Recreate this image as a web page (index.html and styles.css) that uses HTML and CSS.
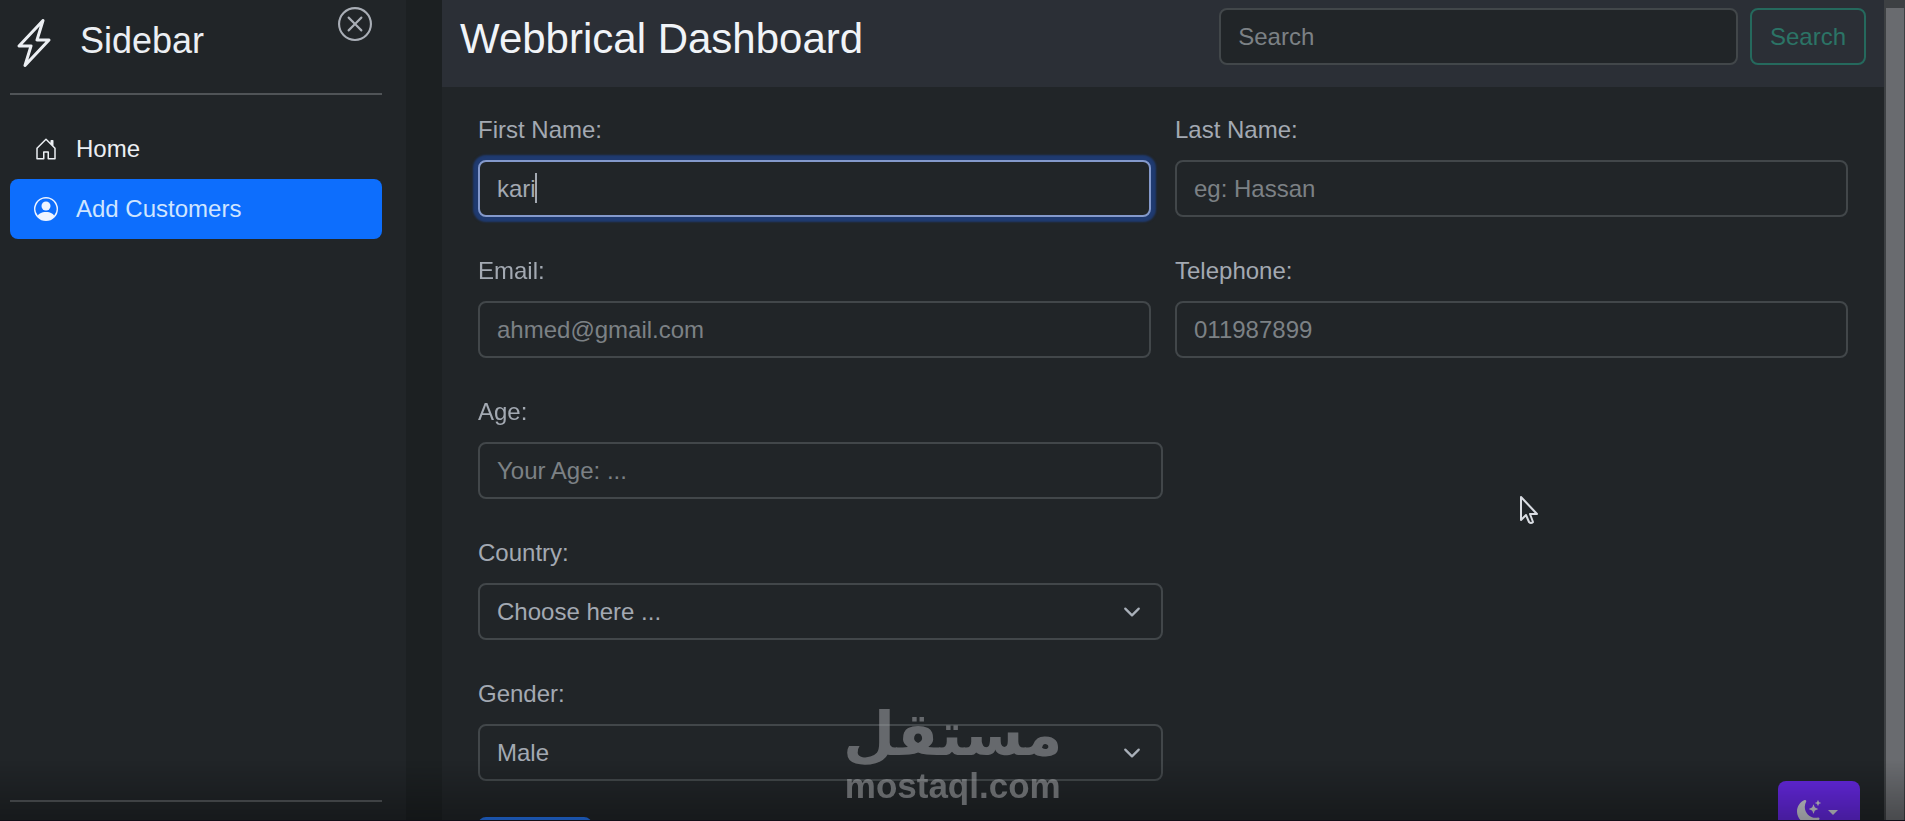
FILE: index.html
```
<!DOCTYPE html>
<html lang="en">
<head>
    <meta charset="UTF-8">
    <meta name="viewport" content="width=device-width, initial-scale=1.0">
    <title>Webbrical Dashboard</title>
    <link rel="stylesheet" href="styles.css">
</head>
<body>
    <div class="layout">
        <aside class="sidebar">
            <div class="sidebar-head">
                <a href="#" class="brand">
                    <svg class="brand-icon" viewBox="0 0 16 16" fill="currentColor" aria-hidden="true"><path d="M11.251.068a.5.5 0 0 1 .227.58L9.677 6.5H13a.5.5 0 0 1 .364.843l-8 8.5a.5.5 0 0 1-.842-.49L6.323 9.5H3a.5.5 0 0 1-.364-.843l8-8.5a.5.5 0 0 1 .615-.09zM4.157 8.5H7a.5.5 0 0 1 .478.647L6.11 13.59l5.732-6.09H9a.5.5 0 0 1-.478-.647L9.89 2.41z"/></svg>
                    <span>Sidebar</span>
                </a>
                <button type="button" class="close-button" aria-label="Close">
                    <svg viewBox="0 0 16 16" fill="currentColor"><path d="M8 15A7 7 0 1 1 8 1a7 7 0 0 1 0 14m0 1A8 8 0 1 0 8 0a8 8 0 0 0 0 16"/><path d="M4.646 4.646a.5.5 0 0 1 .708 0L8 7.293l2.646-2.647a.5.5 0 0 1 .708.708L8.707 8l2.647 2.646a.5.5 0 0 1-.708.708L8 8.707l-2.646 2.647a.5.5 0 0 1-.708-.708L7.293 8 4.646 5.354a.5.5 0 0 1 0-.708"/></svg>
                </button>
            </div>
            <hr class="divider">
            <nav class="nav">
                <a href="#" class="nav-link">
                    <svg class="nav-icon" viewBox="0 0 16 16" fill="currentColor" aria-hidden="true"><path d="M8.354 1.146a.5.5 0 0 0-.708 0l-6 6A.5.5 0 0 0 1.5 7.5v7a.5.5 0 0 0 .5.5h4.5a.5.5 0 0 0 .5-.5v-4h2v4a.5.5 0 0 0 .5.5H14a.5.5 0 0 0 .5-.5v-7a.5.5 0 0 0-.146-.354L13 5.793V2.5a.5.5 0 0 0-.5-.5h-1a.5.5 0 0 0-.5.5v1.293zM2.5 14V7.707l5.5-5.5 5.5 5.5V14H10v-4a.5.5 0 0 0-.5-.5h-3a.5.5 0 0 0-.5.5v4z"/></svg>
                    Home
                </a>
                <a href="#" class="nav-link active">
                    <svg class="nav-icon" viewBox="0 0 16 16" fill="currentColor" aria-hidden="true"><path d="M11 6a3 3 0 1 1-6 0 3 3 0 0 1 6 0"/><path fill-rule="evenodd" d="M0 8a8 8 0 1 1 16 0A8 8 0 0 1 0 8m8-7a7 7 0 0 0-5.468 11.37C3.242 11.226 4.805 10 8 10s4.757 1.225 5.468 2.37A7 7 0 0 0 8 1"/></svg>
                    Add Customers
                </a>
            </nav>
            <hr class="divider">
        </aside>

        <main class="main">
            <header class="header">
                <h1 class="title">Webbrical Dashboard</h1>
                <form class="search">
                    <input type="search" class="control" placeholder="Search" aria-label="Search">
                    <button type="button" class="search-button">Search</button>
                </form>
            </header>

            <form class="customer-form">
                <div class="field">
                    <label for="firstName">First Name:</label>
                    <input type="text" class="control" id="firstName" value="kari">
                    <span class="text-cursor"></span>
                </div>
                <div class="field">
                    <label for="lastName">Last Name:</label>
                    <input type="text" class="control" id="lastName" placeholder="eg: Hassan">
                </div>
                <div class="field">
                    <label for="email">Email:</label>
                    <input type="email" class="control" id="email" placeholder="ahmed@gmail.com">
                </div>
                <div class="field">
                    <label for="telephone">Telephone:</label>
                    <input type="tel" class="control" id="telephone" placeholder="011987899">
                </div>
                <div class="field half">
                    <label for="age">Age:</label>
                    <input type="text" class="control" id="age" placeholder="Your Age: ...">
                </div>
                <div class="field half">
                    <label for="country">Country:</label>
                    <select class="control select" id="country">
                        <option>Choose here ...</option>
                    </select>
                </div>
                <div class="field half">
                    <label for="gender">Gender:</label>
                    <select class="control select" id="gender">
                        <option>Male</option>
                    </select>
                </div>
                <button type="button" class="submit-button" aria-label="Add customer"></button>
            </form>
        </main>

        <div class="scrollbar"><div class="thumb"></div></div>
    </div>

    <button type="button" class="theme-button" aria-label="Toggle theme">
        <svg class="nav-icon" viewBox="0 0 16 16" fill="currentColor"><path d="M6 .278a.77.77 0 0 1 .08.858 7.2 7.2 0 0 0-.878 3.46c0 4.021 3.278 7.277 7.318 7.277q.792-.001 1.533-.16a.79.79 0 0 1 .81.316.73.73 0 0 1-.031.893A8.35 8.35 0 0 1 8.344 16C3.734 16 0 12.286 0 7.71 0 4.266 2.114 1.312 5.124.06A.75.75 0 0 1 6 .278"/><path d="M10.794 3.148a.217.217 0 0 1 .412 0l.387 1.162c.173.518.579.924 1.097 1.097l1.162.387a.217.217 0 0 1 0 .412l-1.162.387a1.73 1.73 0 0 0-1.097 1.097l-.387 1.162a.217.217 0 0 1-.412 0l-.387-1.162A1.73 1.73 0 0 0 9.31 6.593l-1.162-.387a.217.217 0 0 1 0-.412l1.162-.387a1.73 1.73 0 0 0 1.097-1.097zM13.863.099a.145.145 0 0 1 .274 0l.258.774c.115.346.386.617.732.732l.774.258a.145.145 0 0 1 0 .274l-.774.258a1.16 1.16 0 0 0-.732.732l-.258.774a.145.145 0 0 1-.274 0l-.258-.774a1.16 1.16 0 0 0-.732-.732l-.774-.258a.145.145 0 0 1 0-.274l.774-.258c.346-.115.617-.386.732-.732z"/></svg>
        <span class="caret"></span>
    </button>

    <div class="shade"></div>

    <div class="watermark">
        <span class="watermark-ar" lang="ar" dir="rtl">مستقل</span>
        <span class="watermark-en">mostaql.com</span>
    </div>

    <svg class="pointer" viewBox="0 0 20 30" aria-hidden="true"><path d="M2 2v23l5-5 3 7q2 2 4 0l-3-8h7z" fill="#212529" stroke="#d9dce2" stroke-width="2" stroke-linejoin="round"/></svg>

    <script>
        const firstName = document.getElementById("firstName");
        firstName.focus();
        firstName.setSelectionRange(4, 4);
    </script>
</body>
</html>
```
FILE: styles.css
```
* {
    box-sizing: border-box;
}
body {
    margin: 0;
    height: 100vh;
    overflow: hidden;
    background: #1c2022;
    color: #a3a9b2;
    font-family: "Liberation Sans", Arial, sans-serif;
    font-size: 24px;
    line-height: 36px;
}
button, input, select {
    font: inherit;
}
a {
    color: inherit;
    text-decoration: none;
}
.layout {
    display: flex;
    height: 100%;
    overflow: hidden;
}

/* Sidebar */
.sidebar {
    display: flex;
    flex-direction: column;
    flex: 0 0 406px;
    margin-right: 36px;
    padding: 7px 24px 19px 10px;
    background: #212528;
    color: #eceff3;
}
.sidebar-head {
    display: flex;
    justify-content: space-between;
    align-items: flex-start;
    padding-right: 10px;
}
.brand {
    display: flex;
    align-items: center;
    gap: 22px;
    padding: 12px 0 26px;
    font-size: 36px;
}
.brand span {
    padding-bottom: 4px;
}
.brand-icon {
    width: 48px;
    height: 48px;
}
.close-button {
    display: flex;
    padding: 0;
    border: 0;
    background: none;
    color: #a9aeb6;
}
.close-button svg {
    width: 34px;
    height: 34px;
}
.divider {
    width: 100%;
    height: 2px;
    margin: 0;
    border: 0;
    background: #505457;
}
.nav {
    display: flex;
    flex-direction: column;
    flex: 1;
    padding-top: 24px;
}
.nav-link {
    display: flex;
    align-items: center;
    gap: 18px;
    padding: 12px 24px;
    border-radius: 8px;
}
.nav-link.active {
    background: #0d6efd;
    color: #cfe5ff;
}
.nav-icon {
    width: 24px;
    height: 24px;
}
.active .nav-icon {
    color: #eef4ff;
}

/* Header */
.main {
    flex: 1;
    min-width: 0;
    background: #212528;
}
.header {
    display: flex;
    justify-content: space-between;
    align-items: flex-start;
    padding: 8px 18px 17px;
    background: #2b2f36;
}
.title {
    margin: 0;
    color: #f1f4f8;
    font-size: 42px;
    font-weight: 400;
    line-height: 62px;
}
.search {
    display: flex;
    flex: 0 0 46%;
    gap: 12px;
}
.search-button {
    padding: 0 18px;
    border: 2px solid #25695d;
    border-radius: 8px;
    background: none;
    color: #2b7466;
}

/* Form */
.customer-form {
    display: grid;
    grid-template-columns: 1fr 1fr;
    gap: 36px 24px;
    padding: 25px 36px 0;
}
.field {
    position: relative;
    min-width: 0;
}
.field label {
    display: block;
    margin-bottom: 12px;
}
.half {
    grid-column: 1 / -1;
    width: 50%;
}
.control {
    display: block;
    width: 100%;
    height: 57px;
    padding: 0 17px;
    border: 2px solid #42474a;
    border-radius: 8px;
    background: #212528;
    color: #a3a9b2;
    caret-color: transparent;
    outline: none;
    appearance: none;
}
.control::placeholder {
    color: #7c8185;
    opacity: 1;
}
.control:focus {
    border-color: #8499cb;
    box-shadow: 0 0 2px 5px #1f3a70;
}
.text-cursor {
    position: absolute;
    bottom: 14px;
    left: 57px;
    width: 2px;
    height: 30px;
    background: #a3a9b2;
}
.select {
    background: #212528 url("data:image/svg+xml,%3Csvg xmlns='http://www.w3.org/2000/svg' viewBox='0 0 16 16'%3E%3Cpath fill='none' stroke='%23a9b0b9' stroke-linecap='round' stroke-linejoin='round' stroke-width='2' d='m2 5 6 6 6-6'/%3E%3C/svg%3E") no-repeat right 17px center / 24px 18px;
}
.submit-button {
    width: 114px;
    height: 57px;
    border: 0;
    border-radius: 8px;
    background: #2575f0;
}

/* Scrollbar */
.scrollbar {
    flex: 0 0 21px;
    padding: 8px 1px 0 2px;
    background: #3d4043;
}
.thumb {
    height: 100%;
    background: #696b6f;
}

/* Floating pieces */
.theme-button {
    position: fixed;
    right: 45px;
    bottom: -18px;
    display: flex;
    align-items: center;
    gap: 7px;
    height: 58px;
    padding: 4px 22px 0 19px;
    border: 0;
    border-radius: 8px;
    background: #6528e0;
    color: #c9cbd2;
}
.caret {
    border: 5px solid transparent;
    border-top-color: currentColor;
    border-bottom: 0;
}
.shade {
    position: fixed;
    right: 0;
    bottom: 0;
    left: 0;
    height: 60px;
    border-bottom: 1px solid #120f18;
    background: linear-gradient(transparent, rgba(0, 0, 0, 0.3));
    pointer-events: none;
}
.watermark {
    position: fixed;
    bottom: 15px;
    left: 843px;
    display: flex;
    flex-direction: column;
    align-items: center;
    color: #a0a2a6;
    font-weight: 700;
    opacity: 0.55;
    pointer-events: none;
}
.watermark-ar {
    font-family: "DejaVu Sans", sans-serif;
    font-size: 60px;
    line-height: 64px;
}
.watermark-en {
    font-size: 35px;
    line-height: 40px;
}
.pointer {
    position: fixed;
    top: 495px;
    left: 1519px;
    width: 20px;
    height: 30px;
}
```
